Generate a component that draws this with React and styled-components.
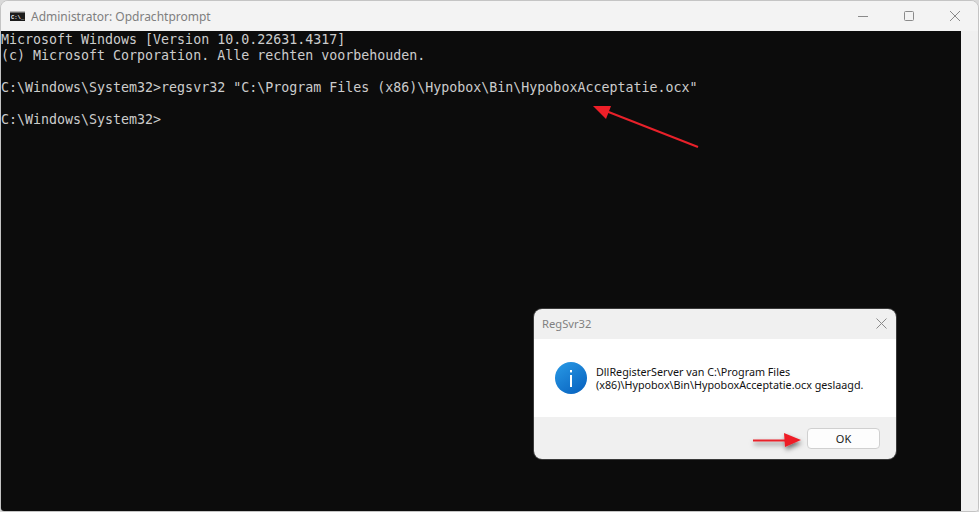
import React from "react";
import styled, { createGlobalStyle } from "styled-components";

const Global = createGlobalStyle`
  html, body { margin: 0; padding: 0; background: #d9d9d9; }
  #root { width: 979px; height: 512px; overflow: hidden; }
`;

const Window = styled.div`
  width: 979px;
  height: 512px;
  box-sizing: border-box;
  display: flex;
  flex-direction: column;
  background: #f2f2f2;
  border: 1px solid #c4c4c4;
  border-radius: 8px 8px 4px 4px;
  overflow: hidden;
  font-family: "Noto Sans", "Open Sans", sans-serif;
`;

const TitleBar = styled.div`
  height: 30px;
  flex: none;
  display: flex;
  align-items: center;
  padding-left: 8.5px;
  background: #f3f3f3;
`;

const AppIcon = styled.svg`
  width: 15px;
  height: 10px;
  flex: none;
  margin-right: 6.5px;
`;

const Title = styled.span`
  font-size: 12px;
  color: #7f7f7f;
  flex: 1;
`;

const Caption = styled.button`
  width: 46px;
  height: 30px;
  padding: 0;
  border: 0;
  background: transparent;
  display: flex;
  align-items: center;
  justify-content: center;
  svg { display: block; }
`;

const Content = styled.div`
  flex: 1;
  display: flex;
  min-height: 0;
`;

const Terminal = styled.pre`
  width: 960px;
  flex: none;
  box-sizing: border-box;
  margin: 0;
  padding: 1px 0 0 0;
  background: #0c0c0c;
  color: #cccccc;
  font-family: "DejaVu Sans Mono", "Liberation Mono", monospace;
  font-size: 13.3px;
  line-height: 16px;
`;

const ScrollTrack = styled.div`
  flex: 1;
  background: #f0f0f0;
`;

const Dialog = styled.div`
  position: absolute;
  left: 534px;
  top: 309px;
  width: 362px;
  height: 150px;
  display: flex;
  flex-direction: column;
  border-radius: 8px;
  overflow: hidden;
  box-shadow: 0 0 0 1px #3a3a3a;
  font-family: "Noto Sans", "Open Sans", sans-serif;
`;

const DialogHead = styled.div`
  height: 30px;
  flex: none;
  box-sizing: border-box;
  display: flex;
  align-items: center;
  justify-content: space-between;
  padding: 0 9px 2px 8px;
  background: #f0f0f0;
  color: #808080;
  font-size: 11.2px;
`;

const DialogBody = styled.div`
  height: 78px;
  flex: none;
  display: flex;
  align-items: center;
  gap: 10px;
  padding-left: 21px;
  background: #ffffff;
`;

const Message = styled.div`
  font-size: 10.75px;
  line-height: 13px;
  padding-top: 2px;
  margin-left: -1px;
  color: #111111;
  white-space: pre;
  font-family: "Noto Sans", sans-serif;
`;

const DialogFoot = styled.div`
  flex: 1;
  display: flex;
  align-items: center;
  justify-content: flex-end;
  padding-right: 16px;
  background: #f0f0f0;
`;

const OkButton = styled.button`
  width: 73px;
  height: 21px;
  padding: 0;
  box-sizing: border-box;
  background: #fdfdfd;
  border: 1px solid #d0d0d0;
  border-radius: 4px;
  color: #1a1a1a;
  font-family: "Noto Sans", sans-serif;
  font-size: 11px;
`;

const Overlay = styled.svg`
  position: absolute;
  left: 0;
  top: 0;
  width: 979px;
  height: 512px;
  pointer-events: none;
`;

export default function App() {
  return (
    <>
      <Global />
      <Window>
        <TitleBar>
          <AppIcon viewBox="0 0 15 10">
            <rect width="15" height="10" fill="#1c1c1c" />
            <rect x="0" y="0" width="15" height="1.5" fill="#b9b9b9" />
            <text x="1" y="7.8" fontFamily="Liberation Mono, monospace" fontSize="5.5" fontWeight="700" fill="#f2f2f2">C:\_</text>
          </AppIcon>
          <Title>Administrator: Opdrachtprompt</Title>
          <Caption aria-label="Minimaliseren">
            <svg width="10" height="10" viewBox="0 0 10 10"><path d="M0 5.5H10" stroke="#8a8a8a" strokeWidth="1" /></svg>
          </Caption>
          <Caption aria-label="Maximaliseren">
            <svg width="10" height="10" viewBox="0 0 10 10"><rect x="0.5" y="0.5" width="9" height="9" rx="1" fill="none" stroke="#8a8a8a" /></svg>
          </Caption>
          <Caption aria-label="Sluiten">
            <svg width="10" height="10" viewBox="0 0 10 10"><path d="M0 0L10 10M10 0L0 10" stroke="#8a8a8a" strokeWidth="1" /></svg>
          </Caption>
        </TitleBar>
        <Content>
          <Terminal>{`Microsoft Windows [Version 10.0.22631.4317]
(c) Microsoft Corporation. Alle rechten voorbehouden.

C:\\Windows\\System32>regsvr32 "C:\\Program Files (x86)\\Hypobox\\Bin\\HypoboxAcceptatie.ocx"

C:\\Windows\\System32>`}</Terminal>
          <ScrollTrack />
        </Content>
      </Window>
      <Dialog>
        <DialogHead>
          <span>RegSvr32</span>
          <svg width="11" height="11" viewBox="0 0 11 11"><path d="M0.5 0.5L10.5 10.5M10.5 0.5L0.5 10.5" stroke="#8a8a8a" strokeWidth="1" /></svg>
        </DialogHead>
        <DialogBody>
          <svg width="32" height="32" viewBox="0 0 32 32">
            <defs>
              <linearGradient id="infoFill" x1="0" y1="0" x2="0.7" y2="1">
                <stop offset="0" stopColor="#2a9be6" />
                <stop offset="1" stopColor="#0a66c2" />
              </linearGradient>
            </defs>
            <circle cx="16" cy="16" r="16" fill="url(#infoFill)" />
            <rect x="15" y="13" width="2" height="12" fill="#ffffff" />
            <rect x="15" y="8" width="2" height="2.4" fill="#ffffff" />
          </svg>
          <Message>{`DllRegisterServer van C:\\Program Files
(x86)\\Hypobox\\Bin\\HypoboxAcceptatie.ocx geslaagd.`}</Message>
        </DialogBody>
        <DialogFoot>
          <OkButton>OK</OkButton>
        </DialogFoot>
      </Dialog>
      <Overlay viewBox="0 0 979 512">
        <defs>
          <filter id="arrowShadow" x="-30%" y="-100%" width="160%" height="300%">
            <feDropShadow dx="1" dy="3" stdDeviation="2.5" floodColor="#000" floodOpacity="0.55" />
          </filter>
        </defs>
        <path d="M698 147L606 111" stroke="#e8212a" strokeWidth="2" />
        <path d="M593 106L611 106L606 119Z" fill="#ee1f28" />
        <g filter="url(#arrowShadow)">
          <path d="M753 440.5H790" stroke="#e8212a" strokeWidth="2" />
          <path d="M801 440L784 433L785 447Z" fill="#ee1f28" />
        </g>
      </Overlay>
    </>
  );
}
